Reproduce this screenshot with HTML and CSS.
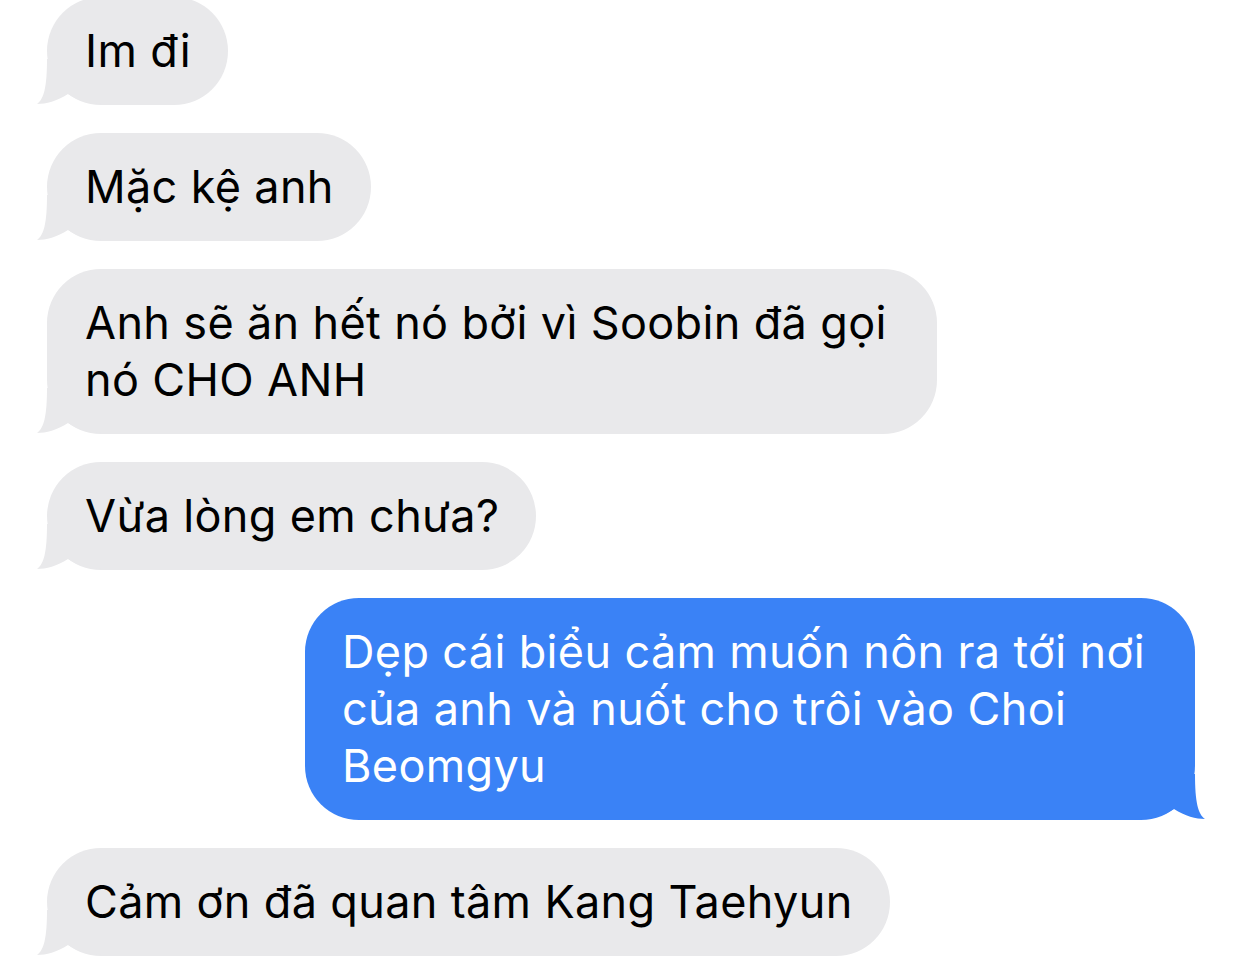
FILE: index.html
```html
<!DOCTYPE html>
<html lang="vi">
<head>
  <meta charset="UTF-8">
  <meta name="viewport" content="width=device-width, initial-scale=1.0">
  <title>Messages</title>
  <link rel="stylesheet" href="styles.css">
</head>

<body>
  <div class="chat">
    <div class="msg in">
      <svg class="tail" viewBox="0 0 64 46"><path d="M10 0 C10 28 7 40 0 45 C9 45 20 42 31 35 C40 41 50 44 64 45 L64 0 Z"/></svg>
      <p>Im đi</p>
    </div>
    <div class="msg in">
      <svg class="tail" viewBox="0 0 64 46"><path d="M10 0 C10 28 7 40 0 45 C9 45 20 42 31 35 C40 41 50 44 64 45 L64 0 Z"/></svg>
      <p>Mặc kệ anh</p>
    </div>
    <div class="msg in">
      <svg class="tail" viewBox="0 0 64 46"><path d="M10 0 C10 28 7 40 0 45 C9 45 20 42 31 35 C40 41 50 44 64 45 L64 0 Z"/></svg>
      <p>Anh sẽ ăn hết nó bởi vì Soobin đã gọi nó CHO ANH</p>
    </div>
    <div class="msg in">
      <svg class="tail" viewBox="0 0 64 46"><path d="M10 0 C10 28 7 40 0 45 C9 45 20 42 31 35 C40 41 50 44 64 45 L64 0 Z"/></svg>
      <p>Vừa lòng em chưa?</p>
    </div>
    <div class="msg out">
      <svg class="tail" viewBox="0 0 64 46"><path d="M10 0 C10 28 7 40 0 45 C9 45 20 42 31 35 C40 41 50 44 64 45 L64 0 Z"/></svg>
      <p>Dẹp cái biểu cảm muốn nôn ra tới nơi của anh và nuốt cho trôi vào Choi Beomgyu</p>
    </div>
    <div class="msg in">
      <svg class="tail" viewBox="0 0 64 46"><path d="M10 0 C10 28 7 40 0 45 C9 45 20 42 31 35 C40 41 50 44 64 45 L64 0 Z"/></svg>
      <p>Cảm ơn đã quan tâm Kang Taehyun</p>
    </div>
  </div>
</body>
</html>
```

FILE: styles.css
```css
* {
  margin: 0;
  padding: 0;
  box-sizing: border-box;
}

body {
  width: 100%;
  height: 100vh;
  overflow: hidden;
  background: #fff;
  font-family: "Inter", "Noto Sans", sans-serif;
}

.chat {
  display: flex;
  flex-direction: column;
  gap: 28px;
  padding: 0 47px;
  margin-top: -3px;
}

.msg {
  position: relative;
  max-width: 890px;
  width: fit-content;
  padding: 25px 37px 26px 38px;
  border-radius: 54px;
  font-size: 45px;
  line-height: 57px;
  letter-spacing: 0.35px;
}

.msg p {
  position: relative;
}

.msg.in {
  align-self: flex-start;
  background: #e9e9eb;
  color: #000;
}

.msg.out {
  align-self: flex-end;
  padding-left: 37px;
  background: #3a82f6;
  color: #fff;
}

.msg .tail {
  position: absolute;
  bottom: 0;
  width: 64px;
  height: 46px;
}

.msg.in .tail {
  left: -10px;
  fill: #e9e9eb;
}

.msg.out .tail {
  right: -10px;
  fill: #3a82f6;
  transform: scaleX(-1);
}
```
